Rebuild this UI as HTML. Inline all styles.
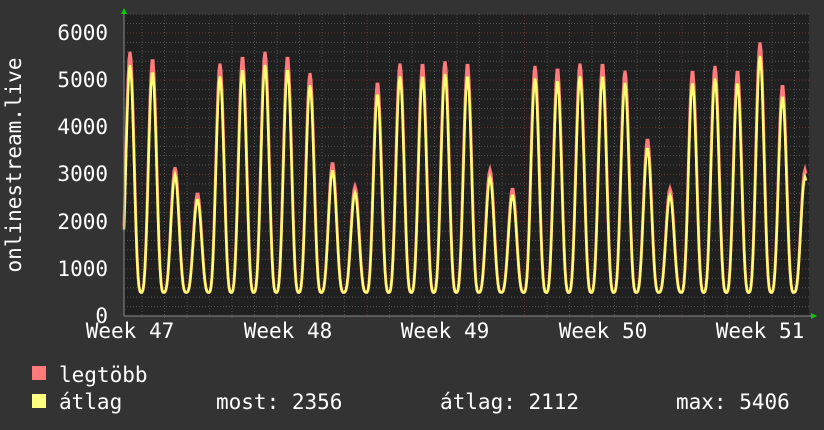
<!DOCTYPE html><html><head><style>
body{margin:0;width:824px;height:430px;background:#333;overflow:hidden;font-family:"DejaVu Sans Mono","Liberation Mono",monospace;color:#fff}
</style></head><body>
<svg id="s" width="824" height="430" xmlns="http://www.w3.org/2000/svg" style="position:absolute;left:0;top:0;font-family:'DejaVu Sans Mono','Liberation Mono',monospace">
<rect x="124" y="14" width="685" height="302" fill="#202020"/>
<g id="grid"></g>
<g id="data"></g>
<line x1="124" y1="316" x2="811" y2="316" stroke="#888" stroke-width="1"/>
<line x1="124" y1="12" x2="124" y2="316" stroke="#888" stroke-width="1"/>
<polygon points="121,14 127,14 124,8" fill="#0c0"/>
<polygon points="811,313 811,319 817,316" fill="#0c0"/>
<g fill="#fff" font-size="21" text-anchor="end">
<text x="108" y="40">6000</text><text x="108" y="87">5000</text><text x="108" y="134">4000</text><text x="108" y="181">3000</text><text x="108" y="229">2000</text><text x="108" y="276">1000</text><text x="108" y="323">0</text>
</g>
<g fill="#fff" font-size="21" text-anchor="middle">
<text x="130" y="338">Week 47</text><text x="288" y="338">Week 48</text><text x="445" y="338">Week 49</text><text x="603" y="338">Week 50</text><text x="760" y="338">Week 51</text>
</g>
<text transform="translate(21,165) rotate(-90)" fill="#fff" font-size="21" text-anchor="middle">onlinestream.live</text>
<rect x="32" y="366" width="14" height="14" fill="#ff7a7a"/>
<rect x="32" y="394" width="14" height="14" fill="#ffff80"/>
<g fill="#fff" font-size="21">
<text x="59" y="382">legtöbb</text>
<text x="59" y="409">átlag</text>
<text x="216" y="409">most: 2356</text>
<text x="440" y="409">átlag: 2112</text>
<text x="676" y="409">max: 5406</text>
</g>
</svg>
<script>
var NS="http://www.w3.org/2000/svg",g=document.getElementById('grid'),d=document.getElementById('data');
function ln(x1,y1,x2,y2,c){var l=document.createElementNS(NS,'line');l.setAttribute('x1',x1);l.setAttribute('y1',y1);l.setAttribute('x2',x2);l.setAttribute('y2',y2);l.setAttribute('stroke',c);l.setAttribute('stroke-dasharray','1,2');g.appendChild(l);}
function Y(v){return 316-v*0.04717;}
for(var v=200;v<=6400;v+=200){ln(124,Y(v),809,Y(v),v%1000==0?'#6a2f2f':'#505050');}
for(var x=142;x<809;x+=22.5){var m=Math.abs(((x-209)%157.5+157.5)%157.5)<1;ln(x,14,x,320,m?'#6a2f2f':'#505050');}
var pk=[5600,5450,3150,2600,5350,5500,5600,5500,5150,3250,2750,4950,5350,5350,5400,5350,3100,2700,5300,5250,5350,5350,5200,3750,2700,5200,5300,5200,5800,4900,3100];
function val(x,sc){var k=Math.round((x-130)/22.5);if(k<0)k=0;if(k>=pk.length)k=pk.length-1;var xp=130+k*22.5;var ph=(x-xp)/22.5;var f=Math.pow((1+Math.cos(2*Math.PI*ph))/2,1.6);var p=pk[k]*sc;return 500+(p-500)*f;}
function path(sc,col,w){var s='';for(var x=124;x<=806;x+=1){s+=(x==124?'M':'L')+x+','+Y(val(x,sc)).toFixed(1);}var p=document.createElementNS(NS,'path');p.setAttribute('d',s);p.setAttribute('fill','none');p.setAttribute('stroke',col);p.setAttribute('stroke-width',w);d.appendChild(p);}
path(1,'#ff7a7a',3);path(0.95,'#ffff70',2.5);
</script>
</body></html>
